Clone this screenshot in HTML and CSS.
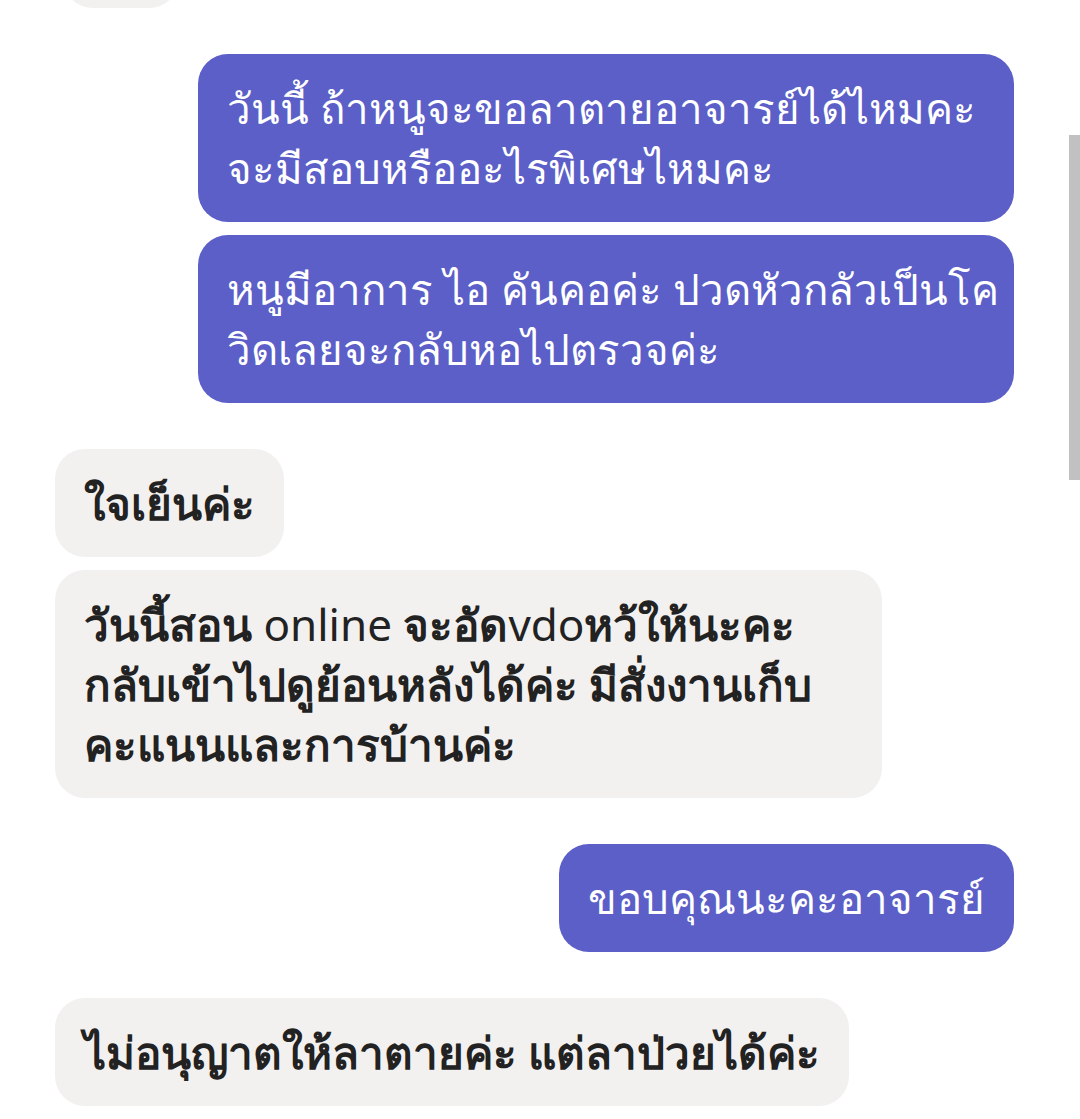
FILE: index.html
```html
<!DOCTYPE html>
<html lang="th">
<head>
<meta charset="utf-8">
<link rel="stylesheet" href="styles.css">
</head>
<body>
<div class="chat">
  <div class="bubble in stub"></div>
  <div class="bubble out wide first">วันนี้ ถ้าหนูจะขอลาตายอาจารย์ได้ไหมคะ<br>จะมีสอบหรืออะไรพิเศษไหมคะ</div>
  <div class="bubble out wide">หนูมีอาการ ไอ คันคอค่ะ ปวดหัวกลัวเป็นโค<br>วิดเลยจะกลับหอไปตรวจค่ะ</div>
  <div class="bubble in first"><b>ใจเย็นค่ะ</b></div>
  <div class="bubble in wide"><b>วันนี้สอน</b> online <b>จะอัด</b>vdo<b>หว้ให้นะคะ</b><br><b>กลับเข้าไปดูย้อนหลังได้ค่ะ มีสั่งงานเก็บ</b><br><b>คะแนนและการบ้านค่ะ</b></div>
  <div class="bubble out first">ขอบคุณนะคะอาจารย์</div>
  <div class="bubble in first"><b>ไม่อนุญาตให้ลาตายค่ะ แต่ลาป่วยได้ค่ะ</b></div>
</div>
<div class="scrollbar"></div>
</body>
</html>
```
FILE: styles.css
```css
html, body {
  margin: 0;
  padding: 0;
  background: #ffffff;
  width: 1080px;
  height: 1119px;
  overflow: hidden;
}
body {
  position: relative;
  font-family: "Noto Sans", sans-serif;
}
.chat {
  display: flex;
  flex-direction: column;
  padding: 0 66px 0 55px;
}
.bubble {
  box-sizing: border-box;
  border-radius: 30px;
  padding: 24px 29px 24px 29px;
  font-size: 42px;
  line-height: 60px;
  height: auto;
  white-space: nowrap;
  margin-top: 13px;
}
.bubble.first {
  margin-top: 46px;
}
.out {
  align-self: flex-end;
  background: #5b5fc7;
  color: #ffffff;
}
.out.wide {
  width: 816px;
}
.in {
  align-self: flex-start;
  background: #f2f1f0;
  color: #222222;
  font-size: 44px;
}
.in.wide {
  width: 827px;
}
.in b {
  font-weight: 700;
}
.stub {
  width: 116px;
  height: 108px;
  margin-top: -100px;
  margin-left: 8px;
}
.scrollbar {
  position: absolute;
  right: 0;
  top: 135px;
  width: 11px;
  height: 345px;
  background: #c1c1c1;
}
```
